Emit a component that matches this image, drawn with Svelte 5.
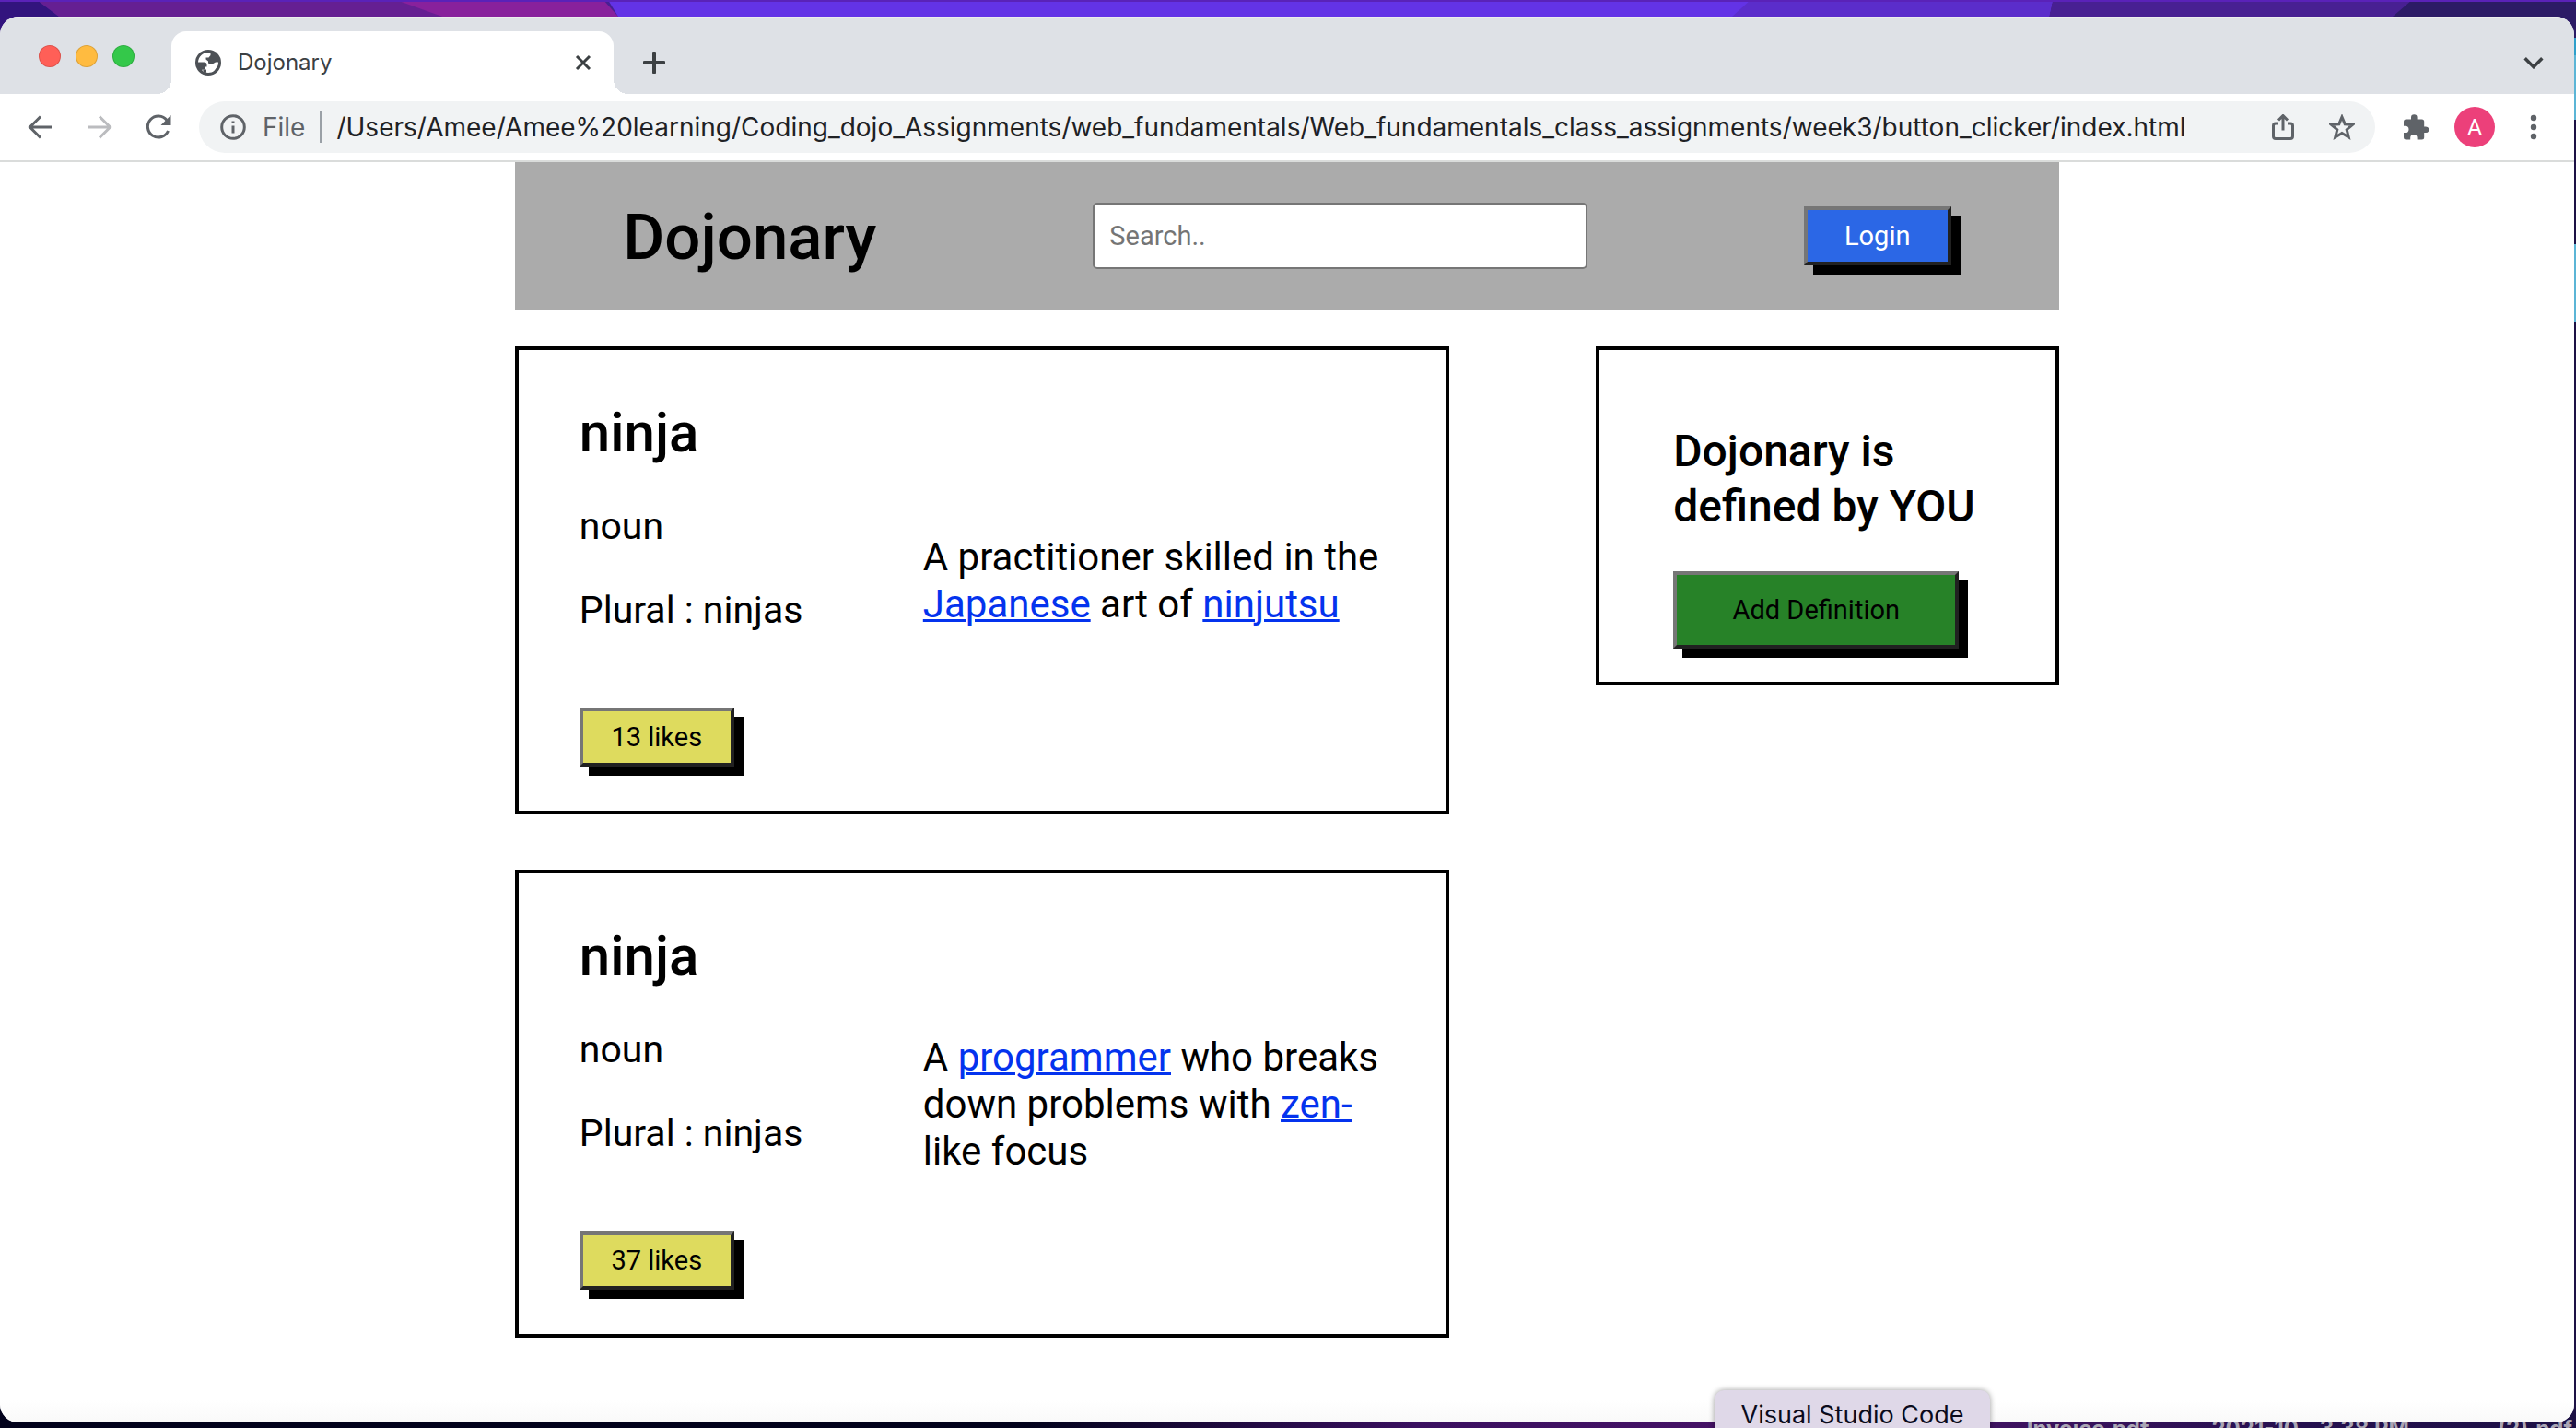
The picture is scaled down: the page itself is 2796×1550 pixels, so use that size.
<script>
  let entries = $state([
    {
      word: 'ninja',
      kind: 'noun',
      plural: 'ninjas',
      likes: 13,
      text: [{ t: 'A practitioner skilled in the ' }, { t: 'Japanese', link: true }, { t: ' art of ' }, { t: 'ninjutsu', link: true }]
    },
    {
      word: 'ninja',
      kind: 'noun',
      plural: 'ninjas',
      likes: 37,
      text: [{ t: 'A ' }, { t: 'programmer', link: true }, { t: ' who breaks down problems with ' }, { t: 'zen-', link: true }, { t: 'like focus' }]
    }
  ]);
  let url = $state('/Users/Amee/Amee%20learning/Coding_dojo_Assignments/web_fundamentals/Web_fundamentals_class_assignments/week3/button_clicker/index.html');
</script>

<div class="desktop">
  <svg class="wallpaper" viewBox="0 0 2796 60" preserveAspectRatio="none" aria-hidden="true">
    <rect width="2796" height="60" fill="#482092" />
    <path d="M0 0H40L64 18V60H0Z" fill="#32147e" />
    <path d="M40 0H440L480 18H64Z" fill="#651f92" />
    <path d="M430 0H655L671 18H480Z" fill="#88219c" />
    <path d="M660 0H2228L2224 18H671Z" fill="#6333e6" />
    <path d="M1900 0H2228L2224 18H1880Z" fill="#5b2dcb" />
    <path d="M2618 0H2796V60H2597V18Z" fill="#2c1b66" />
    <rect width="2796" height="2" fill="#5a22b8" />
    <rect x="2794" y="41" width="2" height="19" fill="#2f9fca" />
  </svg>

  <div class="files" aria-hidden="true">
    <span>Invoice.pdf</span><span>2021-10...3.38 PM</span><span>(2).pdf</span>
  </div>

  <div class="window">
    <div class="tabstrip">
      <div class="lights">
        <button class="light red" aria-label="Close window"></button>
        <button class="light amber" aria-label="Minimise window"></button>
        <button class="light green" aria-label="Zoom window"></button>
      </div>
      <div class="tab">
        <svg class="globe" viewBox="0 0 28 28" aria-hidden="true">
          <circle cx="14" cy="14" r="14" fill="#4d5156" />
          <path d="M14 3C8 3 3.500 7.500 3 13.500H9.500Q12.500 13.500 12.500 16V18.500H10.500V21.500H7.500V22.800C9.500 24.300 11.500 25 14 25C16.500 25 19 24 20.500 22.700C21.500 21.800 22 20.500 23.500 19C24.600 17.500 25 15.500 25 13.500H22L18.500 15.500H15.500Q14 15.500 14 13.500V12.500L11.500 10.500V8.500H14.500L16.500 6V3.300Z" fill="#fff" />
          <path d="M12 18.500V21.500H8L9 24L12 25Z" fill="#4d5156" />
        </svg>
        <span class="tab-title">Dojonary</span>
        <button class="icon close" aria-label="Close tab">
          <svg viewBox="0 0 18 18"><path d="M2 2L16 16M16 2L2 16" /></svg>
        </button>
      </div>
      <button class="icon plus" aria-label="New tab">
        <svg viewBox="0 0 24 24"><path d="M12 1.500V22.500M1.500 12H22.500" /></svg>
      </button>
      <button class="icon chevron" aria-label="Search tabs">
        <svg viewBox="0 0 20 12"><path d="M2 2L10 10L18 2" /></svg>
      </button>
    </div>

    <div class="toolbar">
      <div class="nav">
        <button class="icon" aria-label="Back">
          <svg viewBox="0 0 28 28"><path d="M26 14H3M14 2.500L2.500 14L14 25.500" /></svg>
        </button>
        <button class="icon dim" aria-label="Forward" disabled>
          <svg viewBox="0 0 28 28"><path d="M2 14H25M14 2.500L25.500 14L14 25.500" /></svg>
        </button>
        <button class="icon" aria-label="Reload">
          <svg viewBox="0 0 28 28"><path d="M24.500 18A11.500 11.500 0 1 1 23 6.500" /><path class="solid" d="M27.500 1V12H16.500Z" /></svg>
        </button>
      </div>
      <div class="omnibox">
        <svg class="i28" viewBox="0 0 28 28" aria-hidden="true"><circle cx="14" cy="14" r="12.300" /><path d="M14 12.500V20.500M14 7.500V10" /></svg>
        <label for="url">File</label>
        <input id="url" type="text" bind:value={url} />
        <button class="icon" aria-label="Share">
          <svg viewBox="0 0 28 28"><path d="M9 10H6Q3.500 10 3.500 12.500V24Q3.500 26.500 6 26.500H22Q24.500 26.500 24.500 24V12.500Q24.500 10 22 10H19M14 17.500V2M9 6.500L14 1.500L19 6.500" /></svg>
        </button>
        <button class="icon" aria-label="Bookmark">
          <svg viewBox="0 0 28 28"><path d="M14 3L17.200 10.700L25.500 11.300L19.200 16.700L21.200 24.800L14 20.400L6.800 24.800L8.800 16.700L2.500 11.300L10.800 10.700Z" /></svg>
        </button>
      </div>
      <div class="extras">
        <button class="icon" aria-label="Extensions">
          <svg viewBox="0 0 28 28"><path class="solid" d="M25 13.500H23.200V8Q23.200 5.500 20.700 5.500H15.600V3.500A3.300 3.300 0 0 0 9 3.500V5.500H3.500Q1 5.500 1 8V12.700H2.800A3.700 3.700 0 0 1 2.800 20.100H1V25Q1 27.500 3.500 27.500H8.200V25.700A3.700 3.700 0 0 1 15.600 25.700V27.500H20.700Q23.200 27.500 23.200 25V20.100H25A3.300 3.300 0 0 0 25 13.500Z" /></svg>
        </button>
        <button class="avatar" aria-label="Profile">A</button>
        <button class="icon" aria-label="Menu">
          <svg viewBox="0 0 28 28"><circle class="solid" cx="14" cy="4" r="3.200" /><circle class="solid" cx="14" cy="14" r="3.200" /><circle class="solid" cx="14" cy="24" r="3.200" /></svg>
        </button>
      </div>
    </div>

    <div class="page">
      <header>
        <h1>Dojonary</h1>
        <input class="search" type="text" placeholder="Search.." aria-label="Search" />
        <button class="btn login">Login</button>
      </header>
      <div class="columns">
        <main>
          {#each entries as entry}
            <article>
              <div class="term">
                <h2>{entry.word}</h2>
                <p>{entry.kind}</p>
                <p>Plural : {entry.plural}</p>
                <button class="btn likes" onclick={() => entry.likes++}>{entry.likes} likes</button>
              </div>
              <p class="definition">
                {#each entry.text as part}{#if part.link}<a href="#top">{part.t}</a>{:else}{part.t}{/if}{/each}
              </p>
            </article>
          {/each}
        </main>
        <aside>
          <h3>Dojonary is defined by YOU</h3>
          <button class="btn add">Add Definition</button>
        </aside>
      </div>
    </div>
  </div>

  <div class="tooltip">Visual Studio Code</div>
</div>

<style>
  :global(body) {
    overflow: hidden;
  }
  .desktop,
  .desktop :global(*) {
    box-sizing: border-box;
  }
  button {
    font-family: inherit;
    cursor: pointer;
  }
  .desktop {
    position: relative;
    display: flex;
    height: 100vh;
    padding: 18px 2px 6px 0;
    overflow: hidden;
    background:
      linear-gradient(#5bb5d6 130px, #1d1145 130px, #1d1145 265px, #5bb5d6 265px, #5bb5d6 350px, #1d1145 350px) right top / 2px calc(100% - 30px) no-repeat,
      linear-gradient(90deg, #02021c 0%, #02021c 40%, #3a1060 55%, #4a1368 72%, #24104e 90%, #1d1145 100%);
    font-family: Roboto, 'Liberation Sans', sans-serif;
    color: #000;
  }
  .wallpaper {
    position: absolute;
    top: 0;
    left: 0;
    width: 100%;
    height: 60px;
  }
  .files {
    position: absolute;
    right: 4px;
    bottom: -15px;
    display: flex;
    justify-content: flex-end;
    font: 700 24px/28px Inter, sans-serif;
    color: #aaa5b4;
  }
  .files span + span { margin-left: 68px; }
  .files span:last-child { margin-left: 96px; }
  .window {
    position: relative;
    flex: 1;
    display: flex;
    flex-direction: column;
    background: #fff;
    border-radius: 20px;
    overflow: hidden;
  }

  .tabstrip {
    display: flex;
    align-items: flex-end;
    height: 84px;
    padding: 0 32px 0 42px;
    background: #dee1e6;
    border-top: 2px solid #eceded;
  }
  .lights {
    display: flex;
    align-self: center;
    gap: 16px;
    width: 144px;
  }
  .light {
    width: 24px;
    height: 24px;
    padding: 0;
    border: 1px solid #0002;
    border-radius: 50%;
  }
  .red { background: #ff5f57; }
  .amber { background: #ffbb40; }
  .green { background: #34c84a; }
  .tab {
    position: relative;
    display: flex;
    align-items: center;
    gap: 18px;
    width: 480px;
    height: 68px;
    padding: 0 24px 0 26px;
    background: #fff;
    border-radius: 16px 16px 0 0;
  }
  .tab::before,
  .tab::after {
    content: '';
    position: absolute;
    bottom: 0;
    width: 16px;
    height: 16px;
  }
  .tab::before {
    left: -16px;
    background: radial-gradient(circle at 0 0, #dee1e6 16px, #fff 16px);
  }
  .tab::after {
    right: -16px;
    background: radial-gradient(circle at 100% 0, #dee1e6 16px, #fff 16px);
  }
  .globe {
    width: 28px;
    height: 28px;
  }
  .tab-title {
    flex: 1;
    font: 24px/32px Inter, sans-serif;
    color: #3c4043;
  }
  .icon {
    display: block;
    padding: 0;
    border: 0;
    background: none;
    color: #5f6368;
  }
  .icon svg,
  .i28 {
    display: block;
    width: 28px;
    height: 28px;
    fill: none;
    stroke: currentColor;
    stroke-width: 3;
  }
  .icon svg .solid {
    fill: currentColor;
    stroke: none;
  }
  .close svg { width: 18px; height: 18px; }
  .plus svg { width: 24px; height: 24px; stroke-width: 4; stroke-linecap: round; }
  .chevron svg { width: 24px; height: 14px; }
  .close, .plus, .chevron { color: #3c4043; }
  .plus { margin: 0 auto 22px 32px; }
  .chevron { margin-bottom: 27px; }
  .dim { color: #bbbcbf; }

  .toolbar {
    display: flex;
    align-items: center;
    height: 74px;
    padding: 0 30px;
    border-bottom: 2px solid #dadcdb;
  }
  .nav {
    display: flex;
    gap: 36px;
    margin-right: 30px;
  }
  .omnibox {
    flex: 1;
    display: flex;
    align-items: center;
    height: 56px;
    padding: 0 22px 0 23px;
    background: #f1f3f4;
    border-radius: 28px;
    font: 28px/34px Inter, sans-serif;
    color: #5f6368;
  }
  .omnibox label {
    margin-left: 18px;
    padding-right: 16px;
    border-right: 2px solid #9aa0a6;
  }
  .omnibox input {
    flex: 1;
    min-width: 0;
    padding: 0 0 0 16px;
    border: 0;
    outline: 0;
    background: none;
    font: inherit;
    color: #202124;
  }
  .omnibox .icon {
    margin-left: 36px;
  }
  .extras {
    display: flex;
    align-items: center;
    gap: 28px;
    margin-left: 30px;
  }
  .avatar {
    width: 44px;
    height: 44px;
    padding: 0;
    border: 0;
    border-radius: 50%;
    background: #ec407a;
    color: #fff;
    font-size: 24px;
  }

  .page {
    flex: 1;
    padding: 0 20%;
    background: linear-gradient(#fff calc(100% - 24px), #f9f9f9);
  }
  header {
    display: flex;
    justify-content: space-around;
    align-items: center;
    height: 160px;
    background: #ababab;
  }
  h1, h2, h3, p {
    margin: 0;
  }
  h1 {
    padding-top: 4px;
    font-size: 69px;
    line-height: 80px;
    font-weight: 500;
  }
  .search {
    width: 32%;
    height: 72px;
    padding: 0 16px;
    border: 2px solid #767676;
    border-radius: 5px;
    background: #fff;
    font: 29px/36px Roboto, sans-serif;
  }
  .search::placeholder {
    color: #757575;
    opacity: 1;
  }
  .btn {
    display: block;
    height: 64px;
    padding: 0 32px;
    border: 4px solid;
    border-color: #767676 #212121 #212121 #767676;
    border-radius: 0;
    box-shadow: 10px 10px #000;
    font-size: 29px;
    line-height: 36px;
    color: #000;
  }
  .login {
    width: 160px;
    background: #2b67e6;
    color: #fff;
  }
  .likes {
    min-width: 168px;
    padding: 0 28px;
    margin-top: 80px;
    background: #dedb5e;
  }
  .columns {
    display: flex;
    align-items: flex-start;
    justify-content: space-between;
    margin-top: 40px;
  }
  main {
    display: flex;
    flex-direction: column;
    gap: 60px;
    width: 1014px;
  }
  article {
    display: flex;
    align-items: center;
    justify-content: space-between;
    padding: 48px 66px;
    border: 4px solid #000;
  }
  h2 {
    margin-bottom: 34px;
    font-size: 60px;
    line-height: 84px;
    font-weight: 500;
  }
  .term p {
    margin-bottom: 40px;
    font-size: 41px;
    line-height: 51px;
  }
  p.definition {
    width: 501px;
    font-size: 42px;
    line-height: 51px;
  }
  a {
    color: #0433ee;
    text-decoration: underline;
    text-decoration-thickness: 3px;
  }
  aside {
    width: 30%;
    padding: 80px 80px 36px;
    border: 4px solid #000;
  }
  h3 {
    margin-bottom: 40px;
    font-size: 48px;
    line-height: 60px;
    font-weight: 500;
  }
  .add {
    width: 310px;
    height: 84px;
    background: #278228;
  }
  .tooltip {
    position: absolute;
    right: 636px;
    bottom: -10px;
    height: 51px;
    width: 299px;
    border-radius: 10px;
    background: #dfd8e8;
    box-shadow: 0 0 6px #0006;
    font: 27px/53px Inter, sans-serif;
    color: #0b0b1c;
    text-align: center;
  }
</style>
